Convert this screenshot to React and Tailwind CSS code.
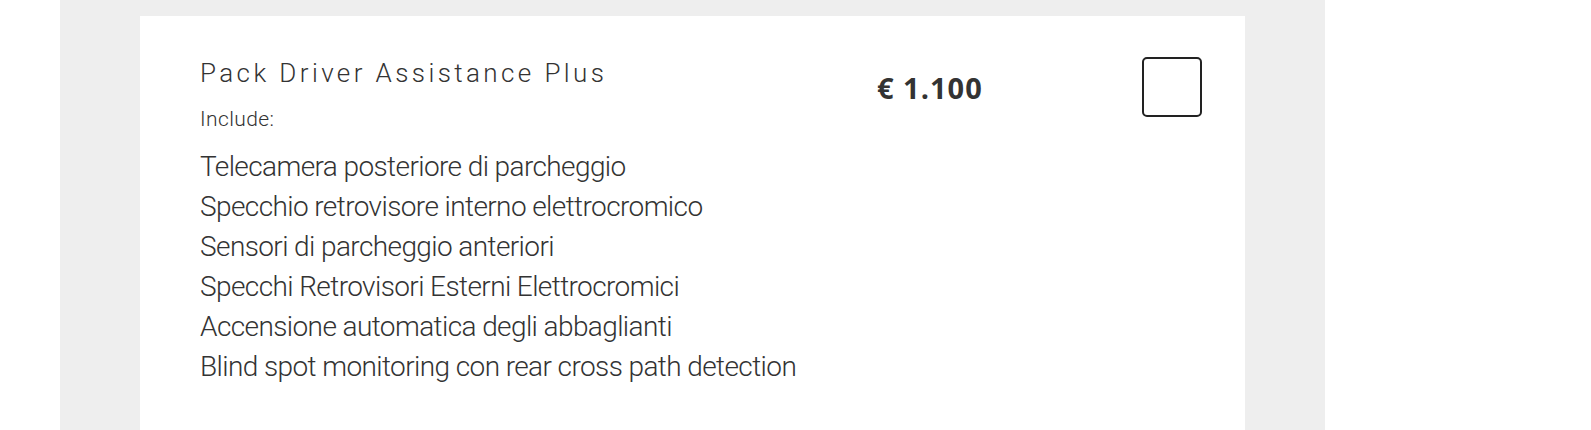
import React from "react";

const items = [
  "Telecamera posteriore di parcheggio",
  "Specchio retrovisore interno elettrocromico",
  "Sensori di parcheggio anteriori",
  "Specchi Retrovisori Esterni Elettrocromici",
  "Accensione automatica degli abbaglianti",
  "Blind spot monitoring con rear cross path detection",
];

export default function App() {
  return (
    <div className="w-[1591px] h-[430px] bg-white flex pl-[60px] overflow-hidden">
      <div className="w-[1265px] h-full bg-[#eeeeee] px-[80px] pt-4">
        <div className="h-full bg-white pl-[60px] pr-[43px] pt-[41px] grid grid-cols-[677px_1fr_60px] items-start text-[#333333]">
          <div className="flex flex-col" style={{ fontFamily: "Roboto, 'Noto Sans', sans-serif" }}>
            <h2 className="text-[26px] leading-[32px] font-light tracking-[3.4px]">
              Pack Driver Assistance Plus
            </h2>
            <p className="mt-[18px] text-[21px] leading-[25px] font-light tracking-[0.4px]">Include:</p>
            <ul className="mt-[15px] flex flex-col">
              {items.map((t) => (
                <li key={t} className="text-[28px] leading-[40px] font-light tracking-[-0.6px]">
                  {t}
                </li>
              ))}
            </ul>
          </div>
          <div
            className="mt-[13px] text-[29px] leading-[36px] font-bold tracking-[1px] text-[#333333]"
            style={{ fontFamily: "'Open Sans', 'Noto Sans', sans-serif" }}
          >
            € 1.100
          </div>
          <div className="w-[60px] h-[60px] border-2 border-[#222222] rounded-[5px] bg-white" />
        </div>
      </div>
    </div>
  );
}
